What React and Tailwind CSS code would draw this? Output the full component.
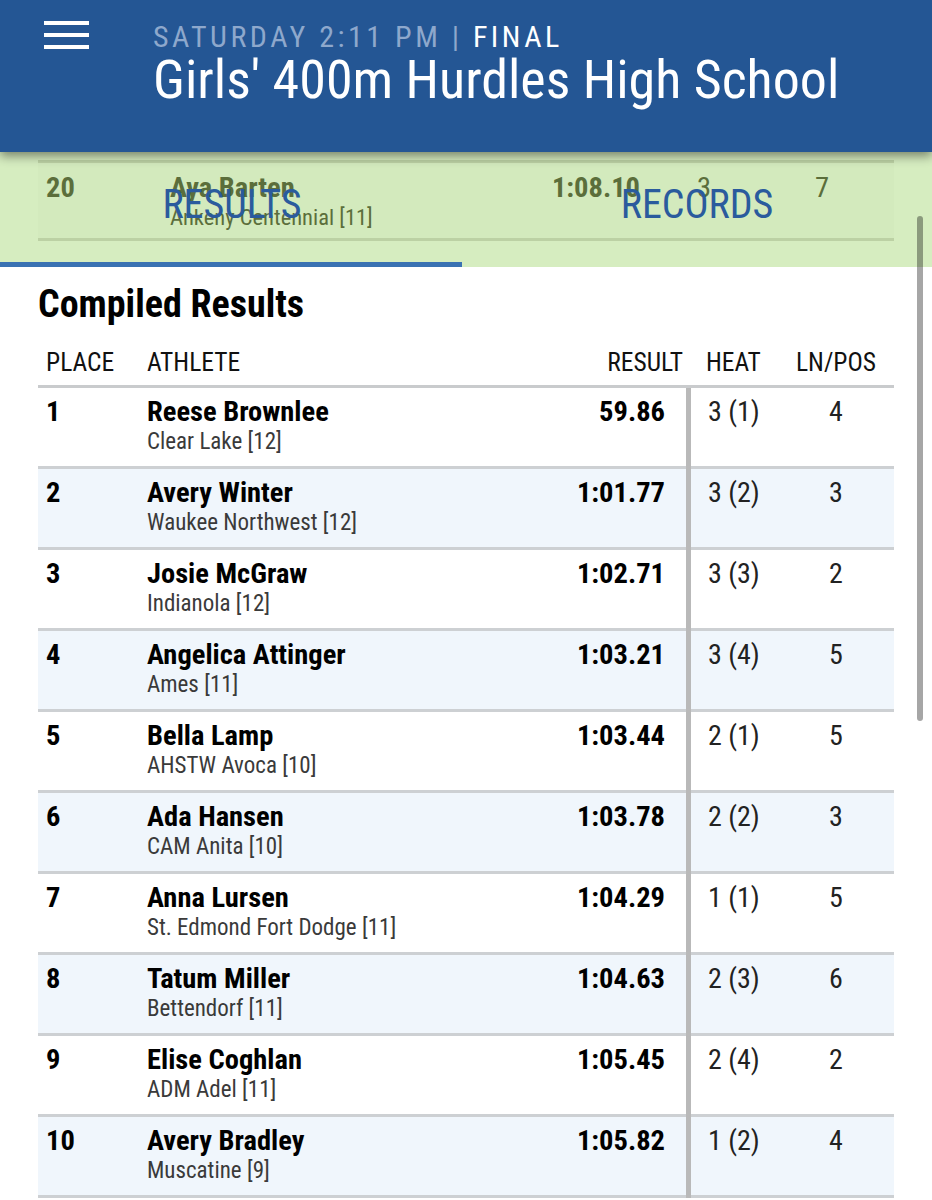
import React from "react";

const rows = [
  ["1", "Reese Brownlee", "Clear Lake [12]", "59.86", "3 (1)", "4"],
  ["2", "Avery Winter", "Waukee Northwest [12]", "1:01.77", "3 (2)", "3"],
  ["3", "Josie McGraw", "Indianola [12]", "1:02.71", "3 (3)", "2"],
  ["4", "Angelica Attinger", "Ames [11]", "1:03.21", "3 (4)", "5"],
  ["5", "Bella Lamp", "AHSTW Avoca [10]", "1:03.44", "2 (1)", "5"],
  ["6", "Ada Hansen", "CAM Anita [10]", "1:03.78", "2 (2)", "3"],
  ["7", "Anna Lursen", "St. Edmond Fort Dodge [11]", "1:04.29", "1 (1)", "5"],
  ["8", "Tatum Miller", "Bettendorf [11]", "1:04.63", "2 (3)", "6"],
  ["9", "Elise Coghlan", "ADM Adel [11]", "1:05.45", "2 (4)", "2"],
  ["10", "Avery Bradley", "Muscatine [9]", "1:05.82", "1 (2)", "4"],
];

const font = { fontFamily: '"Roboto Condensed", "Liberation Sans Narrow", "DejaVu Sans Condensed", Roboto, sans-serif' };

export default function App() {
  return (
    <div className="relative w-[932px] h-[1200px] overflow-hidden bg-white text-black" style={font}>
      {/* Header */}
      <div className="relative z-20 h-[152px] bg-[#245694] shadow-[0_4px_10px_rgba(0,0,0,0.45)] flex">
        <div className="w-[153px] pl-[44px] pt-[21px]">
          <div className="flex flex-col gap-[8px] w-[45px]">
            <div className="h-[4px] bg-white" />
            <div className="h-[4px] bg-white" />
            <div className="h-[4px] bg-white" />
          </div>
        </div>
        <div className="pt-[20px]">
          <div className="text-[30px] leading-[34px] tracking-[3.5px] text-[#8ea8cc]">
            SATURDAY 2:11 PM | <span className="text-white">FINAL</span>
          </div>
          <div className="text-[54px] leading-[56px] text-white -mt-[2px]">Girls' 400m Hurdles High School</div>
        </div>
      </div>

      {/* Green overlay area with tabs */}
      <div className="relative h-[115px] bg-[#d6edc0] pt-[8px]">
        <div className="mx-[38px] h-[81px] border-y-[3px] border-[#bcd1a4] bg-[#d3eabd] flex text-[#5b6e3b]">
          <div className="w-[132px] pl-[8px] pt-[9px] text-[28.5px] font-bold leading-[32px]">20</div>
          <div className="w-[345px] pt-[9px]">
            <div className="text-[28.5px] font-bold leading-[32px]">Aya Barten</div>
            <div className="text-[22.5px] leading-[26px]">Ankeny Centennial [11]</div>
          </div>
          <div className="w-[125px] pt-[9px] text-right text-[28.5px] font-bold leading-[32px]">1:08.10</div>
          <div className="w-[175px] pt-[9px] pl-[57px] text-[28.5px] leading-[32px]">3</div>
          <div className="pt-[9px] text-[28.5px] leading-[32px]">7</div>
        </div>
        <div className="absolute left-0 right-0 top-[33px] flex text-[40px] leading-[40px] text-[#2a5b9d]">
          <div className="w-[464px] text-center">RESULTS</div>
          <div className="w-[466px] text-center">RECORDS</div>
        </div>
        <div className="absolute left-0 bottom-0 w-[462px] h-[5px] bg-[#3a72b3]" />
      </div>

      {/* Scrollbar */}
      <div className="absolute z-10 left-[917px] top-[216px] w-[6px] h-[505px] rounded-full bg-black/35" />

      {/* Content */}
      <div className="px-[38px]">
        <div className="pt-[15px] text-[38px] font-bold leading-[44px]">Compiled Results</div>
        <div className="mt-[20px] flex text-[25.5px] leading-[32px] text-[#111] pb-[7px] border-b-[3px] border-[#c9cbcd] w-[856px]">
          <div className="w-[109px] pl-[8px]">PLACE</div>
          <div className="flex-1">ATHLETE</div>
          <div className="w-[120px] text-right pr-[3px]">RESULT</div>
          <div className="w-[92px] pl-[20px]">HEAT</div>
          <div className="w-[116px] text-center">LN/POS</div>
        </div>
        {rows.map((r, i) => (
          <div
            key={r[0]}
            className={`flex w-[856px] h-[81px] border-b-[3px] border-[#cdd0d3] ${i % 2 === 1 ? "bg-[#f0f6fc]" : "bg-white"}`}
          >
            <div className="w-[109px] pl-[8px] pt-[8px] text-[28.5px] font-bold leading-[32px]">{r[0]}</div>
            <div className="flex-1 pt-[8px]">
              <div className="text-[28.5px] font-bold leading-[32px]">{r[1]}</div>
              <div className="mt-[1px] text-[23px] leading-[26px] text-[#3a3a3a]">{r[2]}</div>
            </div>
            <div className="w-[120px] pr-[21px] pt-[8px] text-right text-[28.5px] font-bold leading-[32px]">{r[3]}</div>
            <div className="w-[5px] -mb-[3px] bg-[#b9b9b9]" />
            <div className="w-[87px] pl-[17px] pt-[8px] text-[28px] leading-[32px] text-[#222]">{r[4]}</div>
            <div className="w-[116px] pt-[8px] text-center text-[28px] leading-[32px] text-[#222]">{r[5]}</div>
          </div>
        ))}
      </div>
    </div>
  );
}
